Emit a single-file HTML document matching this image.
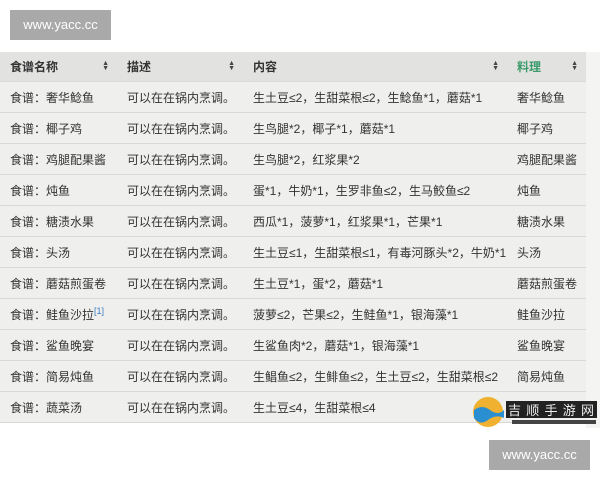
<!DOCTYPE html>
<html><head><meta charset="utf-8"><style>
body{margin:0;width:600px;height:480px;background:#fff;position:relative;overflow:hidden;font-family:"Liberation Sans","Noto Sans CJK SC",sans-serif;}
.wm{position:absolute;background:#a9a9a9;color:#fff;font-size:13px;text-align:center;line-height:30px;width:101px;height:30px}
.strip{position:absolute;left:586px;top:52px;width:14px;height:376px;background:#f4f4f2}
table{position:absolute;left:0;top:52px;width:586px;border-collapse:collapse;table-layout:fixed;font-size:12px;color:#333;background:#efefed}
td,th{height:30px;padding:0 0 0 10px;border-bottom:1px solid #d8d8d6;text-align:left;white-space:nowrap;overflow:visible}
th{background:#e2e2e0;font-weight:bold;height:29px;position:relative}
th span{position:absolute;right:8px;top:9px;font-size:7px;line-height:5px;color:#444}
th.g{color:#3a9a6a}
sup{color:#3a7abf;font-size:9px}
</style></head><body>
<div class="wm" style="left:10px;top:10px">www.yacc.cc</div>
<div class="strip"></div>
<table>
<colgroup><col style="width:117px"><col style="width:126px"><col style="width:264px"><col></colgroup>
<tr><th>食谱名称<span>▲<br>▼</span></th><th>描述<span>▲<br>▼</span></th><th>内容<span>▲<br>▼</span></th><th class="g">料理<span>▲<br>▼</span></th></tr>
<tr><td>食谱：奢华鲶鱼</td><td>可以在在锅内烹调。</td><td>生土豆≤2，生甜菜根≤2，生鲶鱼*1，蘑菇*1</td><td>奢华鲶鱼</td></tr>
<tr><td>食谱：椰子鸡</td><td>可以在在锅内烹调。</td><td>生鸟腿*2，椰子*1，蘑菇*1</td><td>椰子鸡</td></tr>
<tr><td>食谱：鸡腿配果酱</td><td>可以在在锅内烹调。</td><td>生鸟腿*2，红浆果*2</td><td>鸡腿配果酱</td></tr>
<tr><td>食谱：炖鱼</td><td>可以在在锅内烹调。</td><td>蛋*1，牛奶*1，生罗非鱼≤2，生马鲛鱼≤2</td><td>炖鱼</td></tr>
<tr><td>食谱：糖渍水果</td><td>可以在在锅内烹调。</td><td>西瓜*1，菠萝*1，红浆果*1，芒果*1</td><td>糖渍水果</td></tr>
<tr><td>食谱：头汤</td><td>可以在在锅内烹调。</td><td>生土豆≤1，生甜菜根≤1，有毒河豚头*2，牛奶*1</td><td>头汤</td></tr>
<tr><td>食谱：蘑菇煎蛋卷</td><td>可以在在锅内烹调。</td><td>生土豆*1，蛋*2，蘑菇*1</td><td>蘑菇煎蛋卷</td></tr>
<tr><td>食谱：鲑鱼沙拉<sup>[1]</sup></td><td>可以在在锅内烹调。</td><td>菠萝≤2，芒果≤2，生鲑鱼*1，银海藻*1</td><td>鲑鱼沙拉</td></tr>
<tr><td>食谱：鲨鱼晚宴</td><td>可以在在锅内烹调。</td><td>生鲨鱼肉*2，蘑菇*1，银海藻*1</td><td>鲨鱼晚宴</td></tr>
<tr><td>食谱：简易炖鱼</td><td>可以在在锅内烹调。</td><td>生鲳鱼≤2，生鲱鱼≤2，生土豆≤2，生甜菜根≤2</td><td>简易炖鱼</td></tr>
<tr><td>食谱：蔬菜汤</td><td>可以在在锅内烹调。</td><td>生土豆≤4，生甜菜根≤4</td><td></td></tr>
</table>
<svg style="position:absolute;left:472px;top:396px" width="128" height="32">
<circle cx="16" cy="16" r="15" fill="#f0b030"/>
<path d="M2 14 Q10 8 18 14 T32 14 L32 22 Q24 18 16 24 T2 22Z" fill="#2a8fd0"/>
<rect x="34" y="5" width="91" height="17" fill="#222"/>
<text x="36" y="19" fill="#eee" font-size="13" font-family="Noto Sans CJK SC" textLength="86">吉顺手游网</text>
<rect x="40" y="24" width="84" height="4" fill="#444"/>
</svg>
<div class="wm" style="left:489px;top:440px">www.yacc.cc</div>
</body></html>
